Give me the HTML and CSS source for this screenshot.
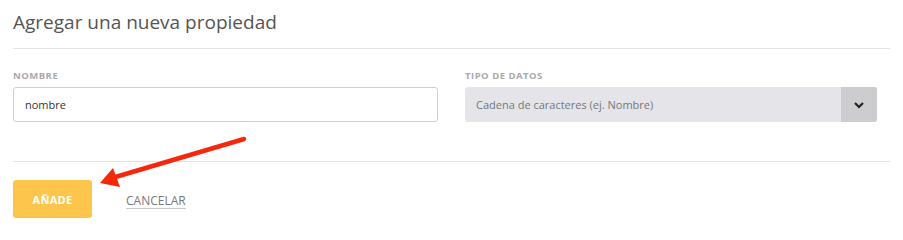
FILE: index.html
```html
<!DOCTYPE html>
<html lang="es">
<head>
<meta charset="utf-8">
<link rel="stylesheet" href="styles.css">
</head>
<body>
<div class="panel">
  <h2 class="title">Agregar una nueva propiedad</h2>
  <div class="fields">
    <div class="field name">
      <label class="label">NOMBRE</label>
      <div class="input">nombre</div>
    </div>
    <div class="field type">
      <label class="label">TIPO DE DATOS</label>
      <div class="select">
        <span class="select-text">Cadena de caracteres (ej. Nombre)</span>
        <span class="select-btn">
          <svg width="12" height="8" viewBox="0 0 12 8"><path d="M2 2 L6 6 L10 2" fill="none" stroke="#222" stroke-width="2.2"/></svg>
        </span>
      </div>
    </div>
  </div>
  <div class="actions">
    <button class="btn-add">AÑADE</button>
    <a class="cancel">CANCELAR</a>
  </div>
  <svg class="arrow" width="160" height="60" viewBox="0 0 160 60">
    <line x1="154" y1="9" x2="22" y2="48" stroke="#f5280c" stroke-width="4.5" stroke-linecap="round"/>
    <polygon points="10,53 23,38 30,57" fill="#f5280c"/>
  </svg>
</div>
</body>
</html>
```
FILE: styles.css
```css
html, body { margin: 0; padding: 0; background: #fff; }
body { font-family: "Open Sans", "Noto Sans", sans-serif; }
.panel { position: relative; width: 877px; padding-left: 13px; }
.title {
  margin: 0; font-weight: 400; font-size: 19px; color: #555;
  height: 49px; box-sizing: border-box; padding-top: 10px; line-height: 24px;
  border-bottom: 1px solid #e3e3e6;
}
.fields { display: flex; gap: 27px; padding-top: 21px; height: 113px; box-sizing: border-box; border-bottom: 1px solid #e3e3e6; }
.field.name { width: 425px; }
.field.type { width: 412px; }
.label { display: block; font-size: 9.5px; font-weight: 700; color: #a9a9ad; letter-spacing: 0.5px; line-height: 12px; height: 17px; }
.input {
  height: 35px; box-sizing: border-box; border: 1px solid #cfcfd3; border-radius: 3px;
  font-size: 11px; color: #333; padding-left: 11px; line-height: 33px;
}
.select {
  display: flex; height: 35px; background: #e5e5e9; border-radius: 3px; overflow: hidden;
}
.select-text { flex: 1; font-size: 11px; color: #76767a; padding-left: 11px; line-height: 35px; }
.select-btn { width: 36px; background: #cdcdcf; display: flex; align-items: center; justify-content: center; }
.actions { display: flex; align-items: center; gap: 34px; padding-top: 18px; }
.btn-add {
  width: 79px; height: 38px; border: 0; border-radius: 3px; background: #fdc54c;
  color: #fff; font-family: inherit; font-weight: 700; font-size: 11px; letter-spacing: 0.3px; padding: 0;
}
.cancel {
  font-size: 12px; color: #77777b; border-bottom: 1px solid #c8c8cc; line-height: 15px; margin-top: 3px;
}
.arrow { position: absolute; left: 90px; top: 130px; }
```
